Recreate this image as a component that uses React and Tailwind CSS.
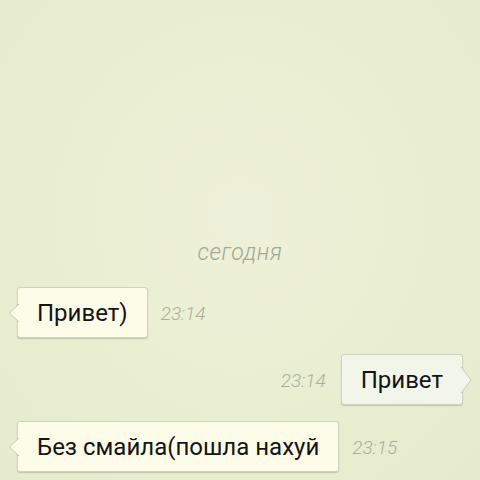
const messages = [
  { id: 1, text: 'Привет)', time: '23:14', out: false },
  { id: 2, text: 'Привет', time: '23:14', out: true },
  { id: 3, text: 'Без смайла(пошла нахуй', time: '23:15', out: false },
]

const Tail = ({ out }) => {
  if (out) {
    return (
      <svg className="absolute top-1/2 -translate-y-1/2 -right-[10px]" width="11" height="26" viewBox="0 0 11 26">
        <polygon points="0,0 10,13 0,26" fill="#f2f6ea" />
        <polyline points="0,0 10,13 0,26" fill="none" stroke="#c9cdbb" strokeWidth="1" />
      </svg>
    )
  }
  return (
    <svg className="absolute top-1/2 -translate-y-1/2 -left-[10px]" width="11" height="18" viewBox="0 0 11 18">
      <polygon points="11,0 1.5,9 11,18" fill="#fcfce9" />
      <polyline points="11,0 1.5,9 11,18" fill="none" stroke="#c9cdbb" strokeWidth="1" />
    </svg>
  )
}

const Bubble = ({ msg }) => {
  const time = (
    <span className="text-[19px] italic font-light text-[#abae9c]">{msg.time}</span>
  )
  return (
    <div className={msg.out ? 'flex items-center justify-end pr-[17px]' : 'flex items-center pl-[17px]'}>
      {msg.out && <div className="mr-[15px] mt-[4px]">{time}</div>}
      <div
        className={
          'relative rounded-[3px] border border-[#cfd3c0] shadow-[0_1px_1px_rgba(120,125,100,0.35)] px-[19px] h-[51px] flex items-center text-[24px] text-[#141414] ' +
          (msg.out ? 'bg-[#f2f6ea]' : 'bg-[#fcfce9]')
        }
      >
        {msg.text}
        <Tail out={msg.out} />
      </div>
      {!msg.out && <div className="ml-[13px] mt-[4px]">{time}</div>}
    </div>
  )
}

export default function App() {
  return (
    <div
      className="w-[480px] h-[480px] overflow-hidden flex flex-col justify-end pb-[8px] bg-[#e9edd2] bg-[radial-gradient(ellipse_at_50%_45%,#eef1d9_0%,#e9eed1_60%,#e6ebcf_100%)]"
      style={{ fontFamily: 'Roboto, "Noto Sans", sans-serif' }}
    >
      <div className="text-center text-[23px] italic font-light text-[#a3a797] mb-[17px] tracking-[0.5px]">сегодня</div>
      <div className="flex flex-col gap-[16px]">
        {messages.map(m => (
          <Bubble key={m.id} msg={m} />
        ))}
      </div>
    </div>
  )
}
